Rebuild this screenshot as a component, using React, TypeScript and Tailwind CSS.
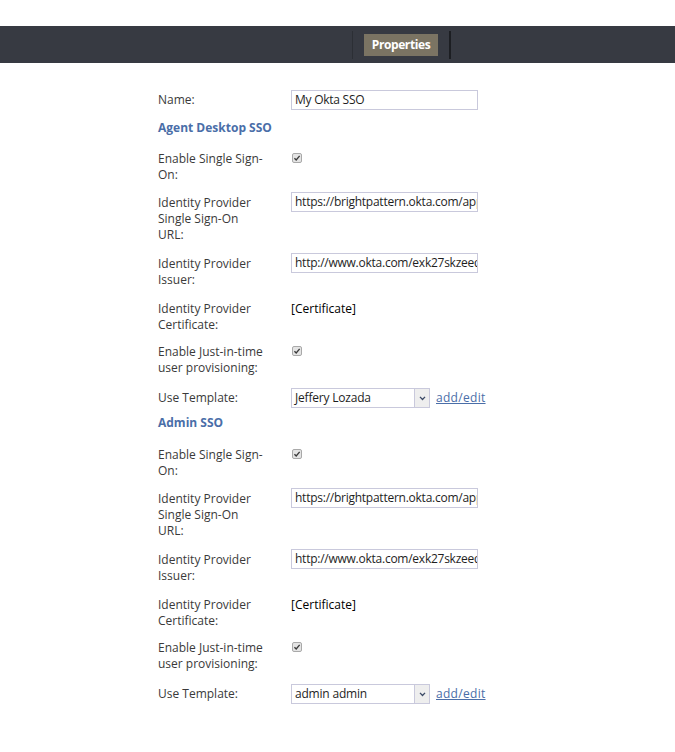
import React from "react";

const font = { fontFamily: '"Open Sans", "Liberation Sans", sans-serif' };

function Check() {
  return (
    <span className="mt-[2px] ml-[1px] flex h-[10px] w-[10px] items-center justify-center rounded-[2px] border border-[#a9a9a9] bg-[#e4e4e4]">
      <svg viewBox="0 0 10 10" className="h-[8px] w-[8px]">
        <path d="M1.8 5.2 L4 7.4 L8.3 2.4" fill="none" stroke="#3a3a3a" strokeWidth="1.7" />
      </svg>
    </span>
  );
}

function TextInput({ value }: { value: string }) {
  return (
    <div className="-mt-[3px] h-[20px] w-[187px] overflow-hidden whitespace-nowrap border border-[#c9c9dc] bg-white pl-[3px] text-[12px] leading-[18px] tracking-[-0.25px] text-[#1e1e1e]">
      {value}
    </div>
  );
}

function Select({ value }: { value: string }) {
  return (
    <div className="flex items-center">
      <div className="flex h-[20px] w-[139px] border border-[#c9c9dc] bg-white">
        <div className="flex-1 pl-[3px] text-[12px] leading-[18px] tracking-[-0.2px] text-[#1e1e1e]">{value}</div>
        <div className="flex w-[15px] items-center justify-center border-l border-[#c9c9dc] bg-[#eeeeee]">
          <svg viewBox="0 0 8 6" className="h-[5px] w-[7px]">
            <path d="M1 1 L4 4.2 L7 1" fill="none" stroke="#3b4a66" strokeWidth="1.6" />
          </svg>
        </div>
      </div>
      <a className="ml-[6px] text-[12px] leading-[16px] tracking-[0.3px] text-[#4a6ea8] underline">add/edit</a>
    </div>
  );
}

function Row({
  label,
  children,
  mb = "mb-[12px]",
}: {
  label: React.ReactNode;
  children?: React.ReactNode;
  mb?: string;
}) {
  return (
    <div className={`flex ${mb}`}>
      <div className="w-[133px] shrink-0 text-[12px] leading-[16px] text-[#3a3a3a]">{label}</div>
      <div className="flex items-start">{children}</div>
    </div>
  );
}

function Section({ title, template, first }: { title: string; template: string; first: boolean }) {
  return (
    <>
      <div className={`${first ? "mb-[15px]" : "mb-[16px]"} text-[12px] font-bold leading-[16px] text-[#4a6ea8]`}>
        {title}
      </div>
      <Row label={<>Enable Single Sign-<br />On:</>}>
        <Check />
      </Row>
      <Row label={<>Identity Provider<br />Single Sign-On<br />URL:</>} mb="mb-[13px]">
        <TextInput value="https://brightpattern.okta.com/app/brightpattern" />
      </Row>
      <Row label={<>Identity Provider<br />Issuer:</>} mb="mb-[13px]">
        <TextInput value="http://www.okta.com/exk27skzeeqpLqVKl0h7" />
      </Row>
      <Row label={<>Identity Provider<br />Certificate:</>} mb="mb-[11px]">
        <span className="text-[12px] leading-[16px] text-black">[Certificate]</span>
      </Row>
      <Row label={<>Enable Just-in-time<br />user provisioning:</>}>
        <Check />
      </Row>
      <div className={`flex h-[20px] items-center ${first ? "mb-[7px]" : ""}`}>
        <div className="w-[133px] shrink-0 text-[12px] leading-[16px] text-[#3a3a3a]">Use Template:</div>
        <Select value={template} />
      </div>
    </>
  );
}

export default function App() {
  return (
    <div className="min-h-[752px] w-[675px] bg-white" style={font}>
      <div className="h-[26px]" />
      <div className="flex h-[37px] items-center bg-[#373a42]">
        <div className="ml-[352px] h-[28px] w-[1px] bg-[#2c2f35]" />
        <div className="ml-[11px] flex h-[22px] w-[74px] items-center justify-center bg-[#7b7463] text-[12px] font-bold tracking-[-0.4px] text-white">
          Properties
        </div>
        <div className="ml-[11px] h-[28px] w-[2px] bg-[#1c1e22]" />
      </div>
      <div className="pl-[158px] pt-[27px]">
        <div className="mb-[10px] flex h-[20px] items-center">
          <div className="w-[133px] shrink-0 text-[12px] leading-[16px] text-[#3a3a3a]">Name:</div>
          <div className="mt-[3px]">
            <TextInput value="My Okta SSO" />
          </div>
        </div>
        <Section title="Agent Desktop SSO" template="Jeffery Lozada" first />
        <Section title="Admin SSO" template="admin admin" first={false} />
      </div>
    </div>
  );
}
